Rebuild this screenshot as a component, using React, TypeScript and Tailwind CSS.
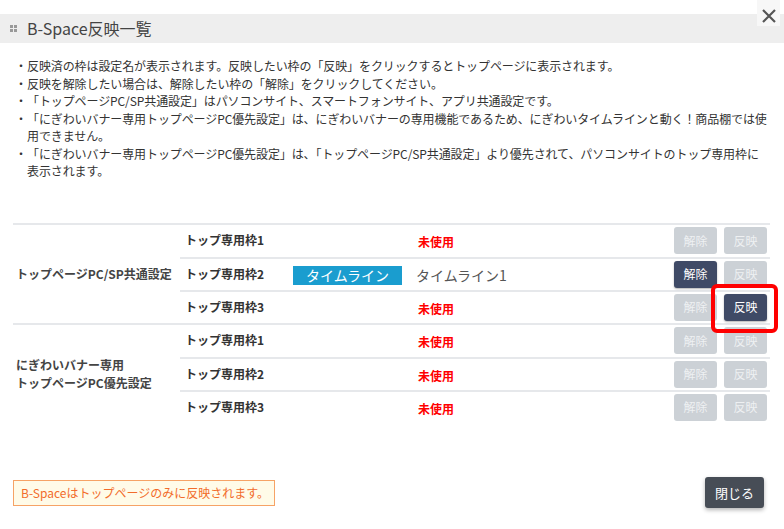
const font = { fontFamily: '"Noto Sans CJK JP", "Noto Sans", sans-serif' };

const notes: string[][] = [
  ["反映済の枠は設定名が表示されます。反映したい枠の「反映」をクリックするとトップページに表示されます。"],
  ["反映を解除したい場合は、解除したい枠の「解除」をクリックしてください。"],
  ["「トップページPC/SP共通設定」はパソコンサイト、スマートフォンサイト、アプリ共通設定です。"],
  [
    "「にぎわいバナー専用トップページPC優先設定」は、にぎわいバナーの専用機能であるため、にぎわいタイムラインと動く！商品棚では使",
    "用できません。",
  ],
  [
    "「にぎわいバナー専用トップページPC優先設定」は、「トップページPC/SP共通設定」より優先されて、パソコンサイトのトップ専用枠に",
    "表示されます。",
  ],
];

type Slot = { name: string; badge?: string; title?: string; release: boolean; apply: boolean };

const groups: { label: string[]; slots: Slot[] }[] = [
  {
    label: ["トップページPC/SP共通設定"],
    slots: [
      { name: "トップ専用枠1", release: false, apply: false },
      { name: "トップ専用枠2", badge: "タイムライン", title: "タイムライン1", release: true, apply: false },
      { name: "トップ専用枠3", release: false, apply: true },
    ],
  },
  {
    label: ["にぎわいバナー専用", "トップページPC優先設定"],
    slots: [
      { name: "トップ専用枠1", release: false, apply: false },
      { name: "トップ専用枠2", release: false, apply: false },
      { name: "トップ専用枠3", release: false, apply: false },
    ],
  },
];

function ActionButton({ label, active }: { label: string; active: boolean }) {
  return (
    <button
      className={
        active
          ? "w-[43px] h-[27px] rounded-[3px] bg-[#3f4a66] text-white text-[12px] shadow-[0_1px_2px_rgba(0,0,0,0.3)]"
          : "w-[43px] h-[27px] rounded-[3px] bg-[#ccd1d6] text-[#eef0f2] text-[12px]"
      }
    >
      {label}
    </button>
  );
}

export default function App() {
  return (
    <div className="relative w-[784px] h-[529px] bg-white overflow-hidden flex flex-col text-[#333]" style={font}>
      {/* Title bar */}
      <div className="mt-[14px] h-[29px] bg-[#eeeeee] flex items-center pl-[10px]">
        <div className="grid grid-cols-2 gap-[1px] mr-[10px]">
          <span className="w-[3px] h-[3px] bg-[#999]" />
          <span className="w-[3px] h-[3px] bg-[#999]" />
          <span className="w-[3px] h-[3px] bg-[#999]" />
          <span className="w-[3px] h-[3px] bg-[#999]" />
        </div>
        <span className="text-[16px] text-[#444] -mt-[1px]">B-Space反映一覧</span>
      </div>

      {/* Close */}
      <button className="absolute top-0 right-[4px] w-[23px] h-[26px] bg-[#f7f7f7] flex items-start justify-center pt-[9px]">
        <svg width="14" height="14" viewBox="0 0 14 14">
          <path d="M1 1 L13 13 M13 1 L1 13" stroke="#555" strokeWidth="2.2" />
        </svg>
      </button>

      {/* Notes */}
      <ul className="mt-[14px] pl-[27px] pr-[4px] text-[12px] leading-[17.5px] tracking-[-0.1px] text-[#333] whitespace-nowrap">
        {notes.map((n, i) => (
          <li key={i} className="relative">
            <span className="absolute left-[-12px]">・</span>
            {n.map((line, j) => (
              <span key={j} className="block">
                {line}
              </span>
            ))}
          </li>
        ))}
      </ul>

      {/* Table */}
      <div className="mt-[43px] mx-[13px] w-[757px]">
        {groups.map((g, gi) => (
          <div key={gi} className="flex border-t-2 border-[#e6e8eb]">
            <div className="w-[167px] flex flex-col justify-center pl-[3px] text-[12px] font-bold leading-[18px] text-[#444]">
              {g.label.map((l) => (
                <span key={l}>{l}</span>
              ))}
            </div>
            <div className="flex-1">
              {g.slots.map((s, si) => (
                <div
                  key={si}
                  className={
                    si === 0
                      ? "h-[32px] flex items-center pl-[5px] pr-[3px]"
                      : "h-[33px] flex items-center pl-[5px] pr-[3px] border-t-2 border-[#e6e8eb]"
                  }
                >
                  <span className="w-[108px] text-[12px] font-bold text-[#333] -mt-[1px]">{s.name}</span>
                  <div className="w-[123px]">
                    {s.badge && (
                      <span className="inline-flex w-[109px] h-[19px] items-center justify-center bg-[#1a9dcf] text-white text-[14px]">
                        {s.badge}
                      </span>
                    )}
                  </div>
                  <div className="flex-1 -mt-[1px]">
                    {s.title ? (
                      <span className="text-[14px] text-[#555]">{s.title}</span>
                    ) : (
                      <span className="ml-[2px] text-[12px] font-bold text-[#ff0000]">未使用</span>
                    )}
                  </div>
                  <div className="flex gap-[7px]">
                    <ActionButton label="解除" active={s.release} />
                    <ActionButton label="反映" active={s.apply} />
                  </div>
                </div>
              ))}
            </div>
          </div>
        ))}
      </div>

      {/* Footer */}
      <div className="mt-auto mb-[21px] flex items-center justify-between pl-[13px] pr-[20px]">
        <div className="h-[26px] w-[262px] border border-[#f6a366] bg-[#fffbe8] flex items-center pl-[7px] text-[12px] text-[#f26c2b]">
          B-Spaceはトップページのみに反映されます。
        </div>
        <button className="w-[59px] h-[31px] rounded-[3px] bg-[#474d56] text-white text-[13px] shadow-[0_2px_4px_rgba(0,0,0,0.3)]">
          閉じる
        </button>
      </div>

      {/* Highlight */}
      <div className="absolute left-[711px] top-[284px] w-[67px] h-[49px] border-4 border-[#ff0000] rounded-[6px]" />
    </div>
  );
}
